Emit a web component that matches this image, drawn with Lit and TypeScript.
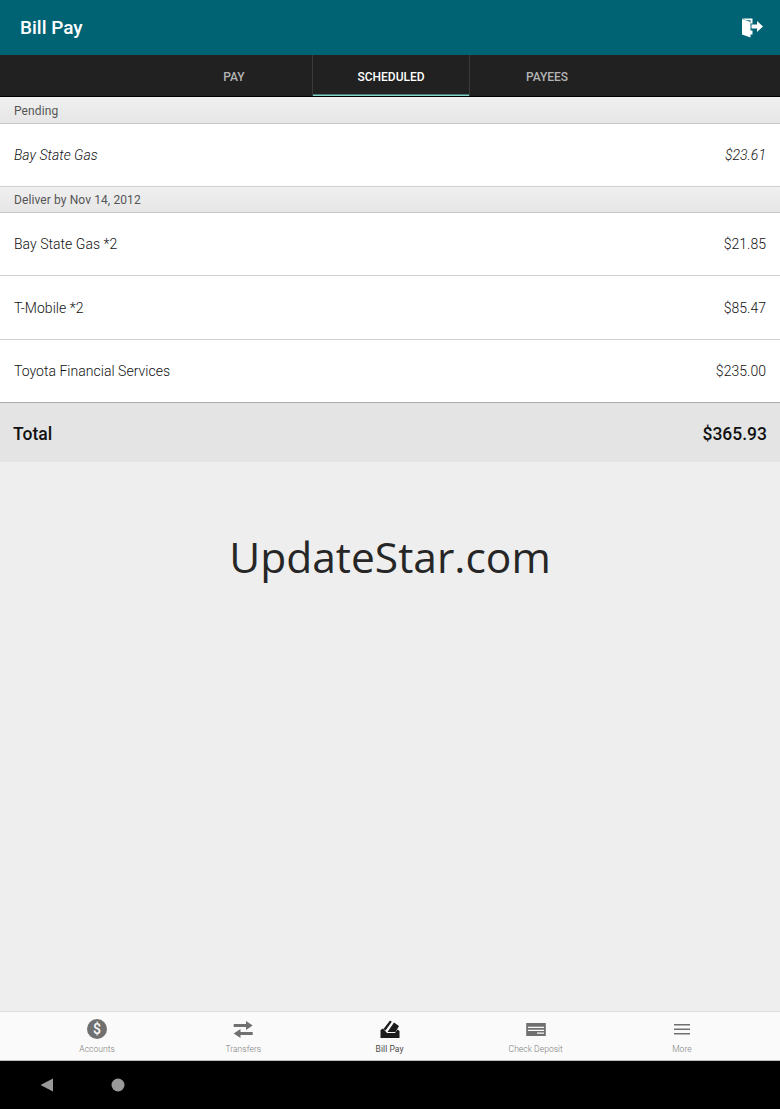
import { LitElement, html, css, svg } from "lit";
import { customElement } from "lit/decorators.js";

const navItems = [
  { label: "Accounts", active: false, icon: svg`<circle cx="12" cy="12" r="10" fill="currentColor"/><text x="12" y="17" text-anchor="middle" font-family="Roboto" font-size="14" font-weight="500" fill="#fafafa">$</text>` },
  { label: "Transfers", active: false, icon: svg`<path fill="currentColor" d="M2.700 7h12.300V4l6.700 4.500L15 13V10H2.700zM21.700 15H9.500V12L2.700 16.500 9.500 21V18h12.200z"/>` },
  { label: "Bill Pay", active: true, icon: svg`<path fill="currentColor" d="M2.500 21v-8l2.500-1.500 4 4.500h8l2.500-3.500 2 1.500V21z"/><path fill="currentColor" d="M5.500 12 12 3.500l1.800 1.200-6.300 8.800zM9.500 15 16 5.500l5 3.500-3.500 6z"/>` },
  { label: "Check Deposit", active: false, icon: svg`<path fill="currentColor" fill-rule="evenodd" d="M2.200 6h19.600v13H2.200zM4 9.700v1.200h16V9.700zM4 12.700v1.200h16v-1.200zM13 15.500v1.200h7v-1.200z"/>` },
  { label: "More", active: false, icon: svg`<path fill="currentColor" d="M4 7h16v1.500H4zM4 11.500h16V13H4zM4 16h16v1.500H4z"/>` },
];

@customElement("app-root")
export class AppRoot extends LitElement {
  static styles = css`
    :host {
      display: flex;
      flex-direction: column;
      width: 780px;
      height: 1109px;
      background: #eeeeee;
      font-family: Roboto, "Liberation Sans", sans-serif;
      overflow: hidden;
    }
    .appbar {
      height: 55px;
      flex: none;
      background: #006374;
      color: #fff;
      display: flex;
      align-items: center;
      justify-content: space-between;
      padding: 0 17px 0 20px;
    }
    .appbar h1 { margin: 0; font-size: 19px; font-weight: 500; }
    .exit { width: 22px; height: 22px; display: block; }
    .tabs {
      height: 42px;
      flex: none;
      box-sizing: border-box;
      background: #212121;
      border-bottom: 1px solid #000;
      display: flex;
      padding-left: 156px;
    }
    .tab {
      width: 156px;
      display: flex;
      align-items: center;
      justify-content: center;
      padding-top: 2px;
      font-size: 12px;
      font-weight: 500;
      color: #b4b4b4;
      box-sizing: border-box;
    }
    .tab.payees { padding-right: 2px; }
    .tab.on {
      width: 158px;
      color: #fff;
      border-left: 1px solid #3a3a3a;
      border-right: 1px solid #3a3a3a;
      box-shadow: inset 0 -1.500px 0 #7fd6c8;
    }
    .section {
      height: 27px;
      flex: none;
      box-sizing: border-box;
      padding: 2px 14px 0;
      display: flex;
      align-items: center;
      font-size: 12px;
      letter-spacing: 0.1px;
      color: #555;
      background: linear-gradient(#f0f0f0, #e6e6e6);
      border-bottom: 1px solid #c8c8c8;
    }
    .section.short { height: 26px; padding-top: 1px; }
    .row {
      height: 63px;
      flex: none;
      box-sizing: border-box;
      padding: 0 14px;
      background: #fff;
      display: flex;
      align-items: center;
      justify-content: space-between;
      font-size: 14px;
      font-weight: 300;
      color: #111;
      letter-spacing: 0.03px;
      border-bottom: 1px solid #cfcfcf;
    }
    .row.pending { font-style: italic; }
    .row.tall { height: 64px; }
    .row.last { border-bottom: 1px solid #aaa; }
    .total {
      height: 59px;
      flex: none;
      box-sizing: border-box;
      padding: 2px 13px 0;
      background: #e4e4e4;
      display: flex;
      align-items: center;
      justify-content: space-between;
      font-size: 17.500px;
      font-weight: 500;
      color: #111;
    }
    .canvas {
      flex: 1;
      display: flex;
      justify-content: center;
      align-items: flex-start;
      padding-top: 63px;
      font-family: "Open Sans", "Noto Sans", sans-serif;
      font-size: 42.500px;
      line-height: 64px;
      color: #262626;
    }
    .nav {
      height: 50px;
      flex: none;
      box-sizing: border-box;
      background: #fafafa;
      border-top: 1px solid #e0e0e0;
      border-bottom: 1px solid #bdbdbd;
      display: flex;
      padding: 0 25px 0 24px;
    }
    .nav-item {
      flex: 1;
      display: flex;
      flex-direction: column;
      align-items: center;
      padding-top: 5px;
      color: #707070;
      font-size: 8.500px;
    }
    .nav-item.on { color: #1c1c1c; }
    .nav-item span { margin-top: 3px; color: #7c7c7c; font-weight: 300; letter-spacing: 0.05px; }
    .nav-item.on span { color: #4c4c4c; font-weight: 400; }
    .nav-item svg { width: 24px; height: 24px; display: block; }
    .system {
      height: 48px;
      flex: none;
      background: #000;
      display: flex;
      align-items: center;
      gap: 57px;
      padding-left: 40px;
    }
    .system svg { display: block; }
  `;

  render() {
    return html`
      <header class="appbar">
        <h1>Bill Pay</h1>
        <svg class="exit" viewBox="0 0 22 22" aria-hidden="true">
          <path fill="#fff" d="M1 2 9.500 5v15.500L1 17.500z"/>
          <path fill="#fff" d="M1 1.500h10.500v5H9.500V3.200H5zM9 13.500h2.500v4H9z"/>
          <path fill="#fff" d="M10.500 7.500h5.500V4l6 5.500-6 5.500v-3.500h-5.500z"/>
        </svg>
      </header>
      <nav class="tabs">
        <div class="tab">PAY</div>
        <div class="tab on">SCHEDULED</div>
        <div class="tab payees">PAYEES</div>
      </nav>
      <div class="section">Pending</div>
      <div class="row pending"><span>Bay State Gas</span><span>$23.61</span></div>
      <div class="section short">Deliver by Nov 14, 2012</div>
      <div class="row"><span>Bay State Gas *2</span><span>$21.85</span></div>
      <div class="row tall"><span>T-Mobile *2</span><span>$85.47</span></div>
      <div class="row last"><span>Toyota Financial Services</span><span>$235.00</span></div>
      <div class="total"><span>Total</span><span>$365.93</span></div>
      <main class="canvas">UpdateStar.com</main>
      <footer class="nav">
        ${navItems.map(
          (n) => html`<div class="nav-item ${n.active ? "on" : ""}">
            <svg viewBox="0 0 24 24" aria-hidden="true">${n.icon}</svg>
            <span>${n.label}</span>
          </div>`
        )}
      </footer>
      <div class="system">
        <svg width="14" height="14" viewBox="0 0 14 14" aria-hidden="true"><path fill="#9a9a9a" d="M0.500 7 13 0.500v13z"/></svg>
        <svg width="14" height="14" viewBox="0 0 14 14" aria-hidden="true"><circle cx="7" cy="7" r="6.500" fill="#9a9a9a"/></svg>
      </div>
    `;
  }
}
